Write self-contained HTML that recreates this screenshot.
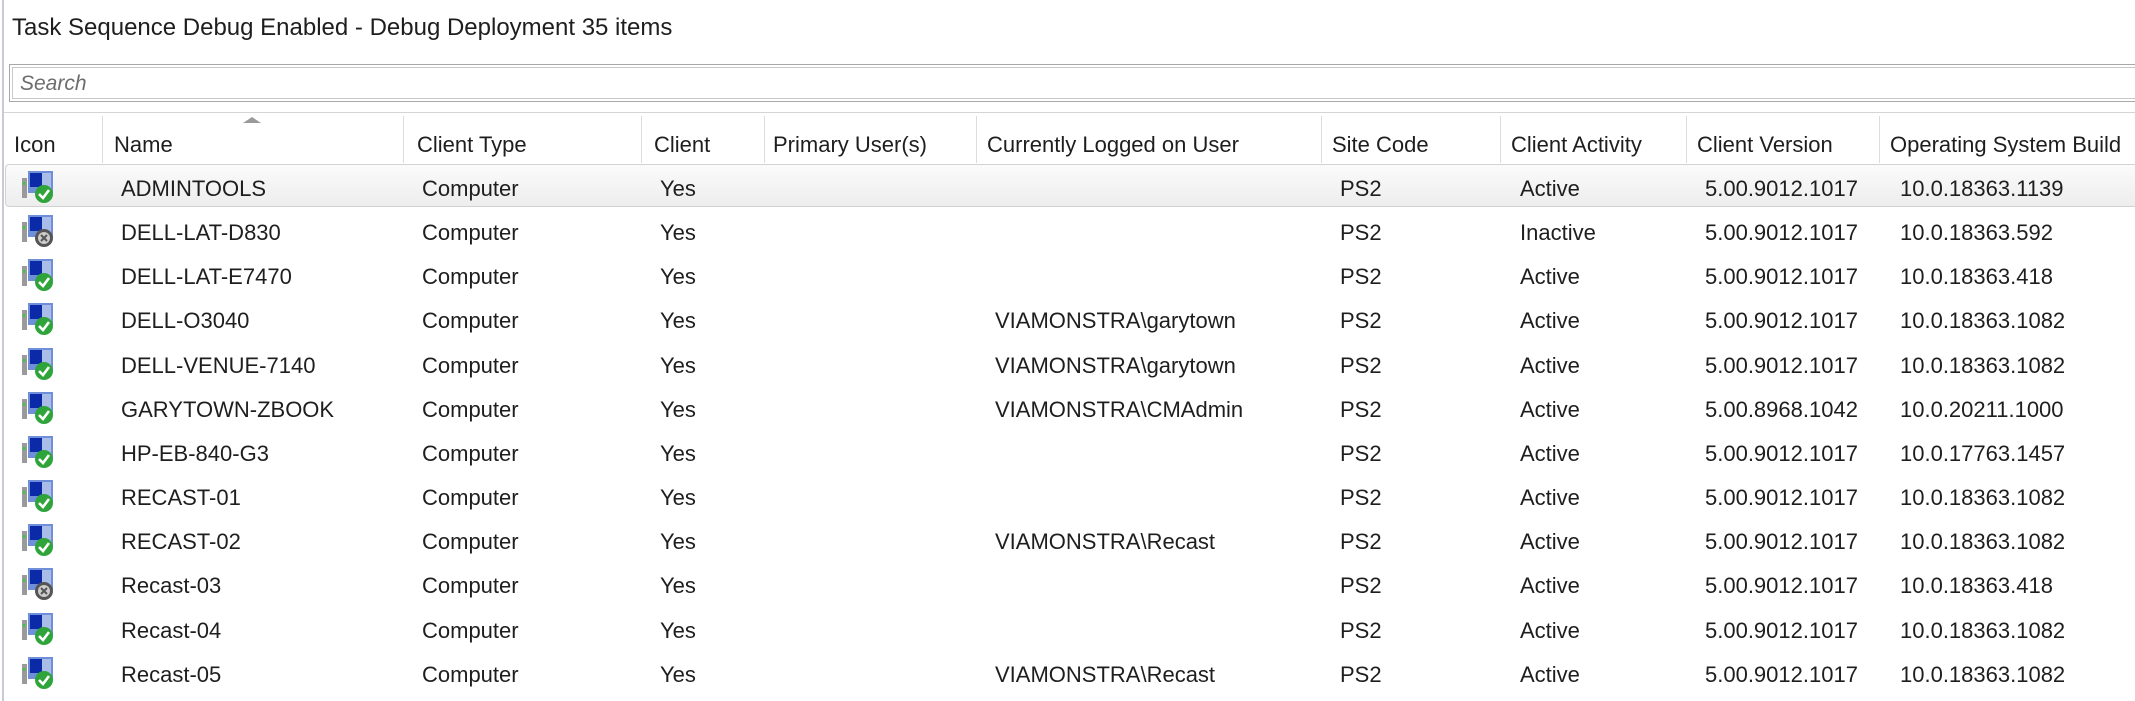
<!DOCTYPE html>
<html style="overflow:hidden"><head><meta charset="utf-8"><style>
html,body{overflow:hidden}
body{margin:0;width:2135px;height:701px;overflow:hidden;background:#fff;font-family:"Liberation Sans",sans-serif;color:#1e1e1e;position:relative}
.a{position:absolute;white-space:nowrap}
.t{font-size:24px}
.h{font-size:22px;top:132px;color:#1e1e1e}
.sep{position:absolute;top:116px;width:1px;height:47px;background:#dcdcdc}
.r{position:absolute;left:0;width:2135px;height:44px;font-size:22px;overflow:hidden}
.r span{position:absolute;top:10px;white-space:nowrap}
.r svg{position:absolute;left:20px;top:4px}
</style></head><body>
<div class="a" style="left:2px;top:0;width:2px;height:701px;background:#c8ccd2"></div>
<div class="a t" style="left:12px;top:14px">Task Sequence Debug Enabled - Debug Deployment 35 items</div>
<div class="a" style="left:9px;top:64px;width:2130px;height:38px;border:1px solid #a8a8a8;box-sizing:border-box;background:#fff">
<div style="position:absolute;left:2px;top:2px;right:0;bottom:2px;border:1px solid #c8c8c8"></div>
<div style="position:absolute;left:10px;top:7px;font-size:21px;font-style:italic;color:#6d6d6d">Search</div></div>
<div class="a" style="left:4px;top:112px;width:2135px;height:1px;background:#d5d5d5"></div>
<div class="sep" style="left:102px"></div><div class="sep" style="left:403px"></div><div class="sep" style="left:641px"></div><div class="sep" style="left:764px"></div><div class="sep" style="left:976px"></div><div class="sep" style="left:1321px"></div><div class="sep" style="left:1500px"></div><div class="sep" style="left:1686px"></div><div class="sep" style="left:1879px"></div>
<div class="a" style="left:243px;top:117px;width:0;height:0;border-left:9px solid transparent;border-right:9px solid transparent;border-bottom:6px solid #9a9a9a"></div>
<div class="a h" style="left:14px">Icon</div><div class="a h" style="left:114px">Name</div><div class="a h" style="left:417px">Client Type</div><div class="a h" style="left:654px">Client</div><div class="a h" style="left:773px">Primary User(s)</div><div class="a h" style="left:987px">Currently Logged on User</div><div class="a h" style="left:1332px">Site Code</div><div class="a h" style="left:1511px">Client Activity</div><div class="a h" style="left:1697px">Client Version</div><div class="a h" style="left:1890px">Operating System Build</div>
<div class="a" style="left:5px;top:164px;width:2140px;height:43px;border:1px solid #d2d2d2;border-radius:4px;background:linear-gradient(#fbfbfb,#ededed);box-sizing:border-box"></div>
<svg width="0" height="0" style="position:absolute"><defs>
<g id="pc"><rect x="2" y="8" width="5" height="20" fill="#9a9a9a"/><rect x="3" y="12" width="2" height="3" fill="#3c3"/><rect x="8" y="1" width="25" height="22" fill="#6f8fd8"/><rect x="10" y="3" width="12" height="14" fill="#0a2aa8"/><rect x="22" y="3" width="9" height="18" fill="#a9bde8"/></g>
<g id="ok"><use href="#pc"/><circle cx="24" cy="24" r="9" fill="#2ea43a"/><path d="M19 24l4 4 6-8" stroke="#fff" stroke-width="2.6" fill="none"/></g>
<g id="no"><use href="#pc"/><circle cx="24" cy="24" r="9" fill="#555"/><circle cx="24" cy="24" r="6" fill="#ccc"/><path d="M21 21l6 6M27 21l-6 6" stroke="#555" stroke-width="2"/></g>
</defs></svg>
<div id="rows"></div>
<script>
var d=[["ok","ADMINTOOLS","","Active","5.00.9012.1017","10.0.18363.1139"],["no","DELL-LAT-D830","","Inactive","5.00.9012.1017","10.0.18363.592"],["ok","DELL-LAT-E7470","","Active","5.00.9012.1017","10.0.18363.418"],["ok","DELL-O3040","VIAMONSTRA\\garytown","Active","5.00.9012.1017","10.0.18363.1082"],["ok","DELL-VENUE-7140","VIAMONSTRA\\garytown","Active","5.00.9012.1017","10.0.18363.1082"],["ok","GARYTOWN-ZBOOK","VIAMONSTRA\\CMAdmin","Active","5.00.8968.1042","10.0.20211.1000"],["ok","HP-EB-840-G3","","Active","5.00.9012.1017","10.0.17763.1457"],["ok","RECAST-01","","Active","5.00.9012.1017","10.0.18363.1082"],["ok","RECAST-02","VIAMONSTRA\\Recast","Active","5.00.9012.1017","10.0.18363.1082"],["no","Recast-03","","Active","5.00.9012.1017","10.0.18363.418"],["ok","Recast-04","","Active","5.00.9012.1017","10.0.18363.1082"],["ok","Recast-05","VIAMONSTRA\\Recast","Active","5.00.9012.1017","10.0.18363.1082"],["ok","","","","",""]];
var h="";d.forEach(function(r,i){var t=166+i*44.15;var hh=i==12?(701-t):44;h+='<div class="r" style="top:'+t+'px;height:'+hh+'px"><svg width="36" height="36" viewBox="0 0 36 36"><use href="#'+r[0]+'"/></svg>';if(r[1])h+='<span style="left:121px">'+r[1]+'</span><span style="left:422px">Computer</span><span style="left:660px">Yes</span><span style="left:995px">'+r[2]+'</span><span style="left:1340px">PS2</span><span style="left:1520px">'+r[3]+'</span><span style="left:1705px">'+r[4]+'</span><span style="left:1900px">'+r[5]+'</span>';h+='</div>';});
document.getElementById("rows").innerHTML=h;
</script>
</body></html>
